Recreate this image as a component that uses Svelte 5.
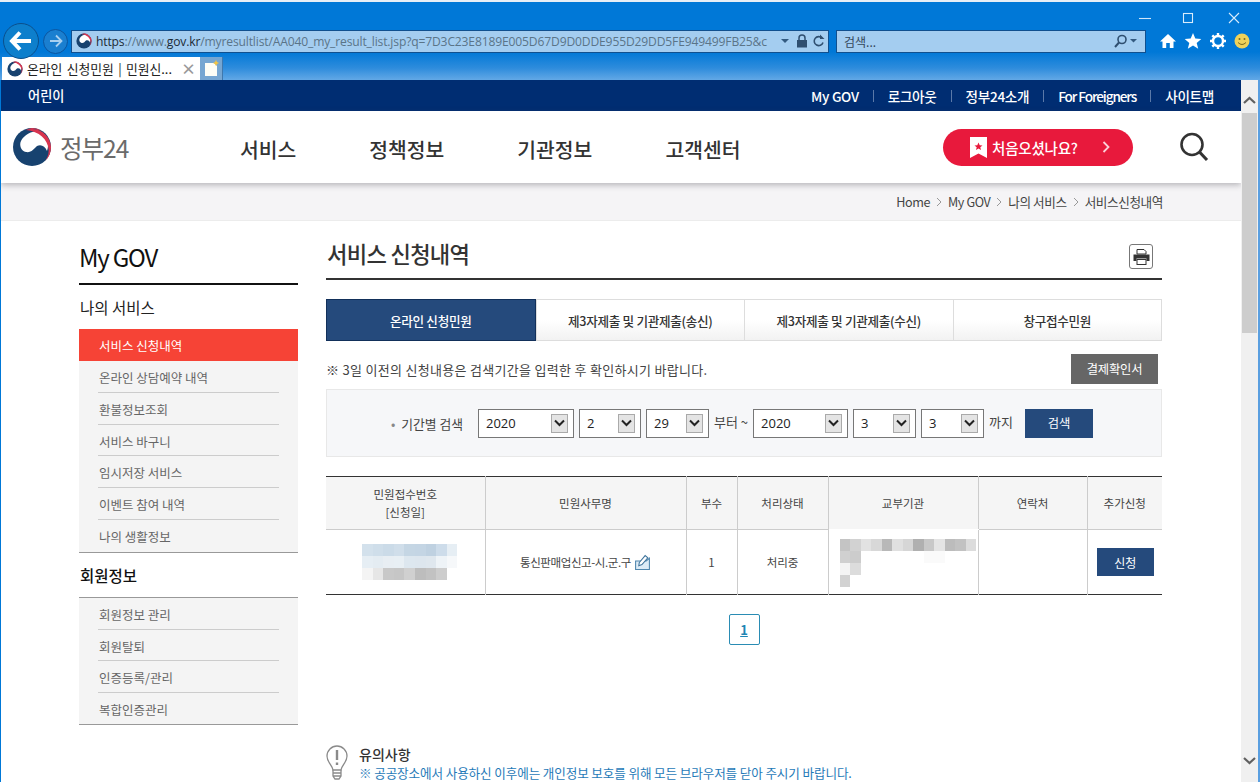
<script>
  const links = ['My GOV', '로그아웃', '정부24소개', 'For Foreigners', '사이트맵'];
  const mainNav = ['서비스', '정책정보', '기관정보', '고객센터'];
  const crumbs = ['Home', 'My GOV', '나의 서비스', '서비스신청내역'];
  const tabs = ['온라인 신청민원', '제3자제출 및 기관제출(송신)', '제3자제출 및 기관제출(수신)', '창구접수민원'];
  const myService = ['온라인 상담예약 내역', '환불정보조회', '서비스 바구니', '임시저장 서비스', '이벤트 참여 내역', '나의 생활정보'];
  const member = ['회원정보 관리', '회원탈퇴', '인증등록/관리', '복합인증관리'];

  const from = [{ v: '2020', w: 96 }, { v: '2', w: 62 }, { v: '29', w: 63 }];
  const to = [{ v: '2020', w: 95 }, { v: '3', w: 63 }, { v: '3', w: 63 }];

  const w = '#fff';
  const mosaicA = [
    '#d3e1ec', '#cfdeea', '#cbdbe8', '#d0deea', '#c5d6e4', '#c4d5e4', '#bfd1e1', '#cddcea', '#e6eef4',
    '#e6eef4', '#e4ecf2', '#e8eef3', '#e8eff4', '#dde7ef', '#dde6ee', '#dfe7ee', '#eef3f7', '#f6f8fa',
    '#f4f4f4', '#e6e6e6', '#c8c8c8', '#c6c6c6', '#d0d0d0', '#bdbdbd', '#c2c2c2', '#cdcdcd', w
  ];
  const mosaicB = [
    '#c4c4c4', '#d2d2d2', '#e2e2e2', '#d8d8d8', '#b8b8b8', '#e0e0e0', '#d6d6d6', '#b0b0b0', '#c8c8c8', '#e4e4e4', '#bcbcbc', '#c2c2c2', '#dcdcdc',
    '#d0d0d0', '#cccccc', w, w, w, w, w, w, '#fafafa', '#fafafa', w, w, w,
    '#f4f4f4', '#dcdcdc', w, w, w, w, w, w, w, w, w, w, w,
    '#d2d2d2', w, w, w, w, w, w, w, w, w, w, w, w
  ];
</script>

{#snippet emblem(size)}
  <svg class="emblem" width={size} height={size} viewBox="0 0 40 40">
    <circle cx="20" cy="20" r="19" fill="#17426f" />
    <path d="M27 4C35 7 38 16 35 24C33 19 29 17 25 19C22 22 19 26 14 25C9 24 7 18 9 14C12 8 19 4 27 4Z" fill="#fff" />
    <path d="M39 20A19 19 0 0 1 33 34C36 30 37 26 36.500 22C36 13 27 4 14 3A19 19 0 0 1 39 20Z" fill="#d8344f" />
    <path d="M14 3A19 19 0 0 1 20 1A19 19 0 0 1 30 4C24 2 19 2 14 3Z" fill="#d8344f" />
  </svg>
{/snippet}

{#snippet selectBox(item)}
  <div class="select" style="width: {item.w}px">
    <span>{item.v}</span>
    <i class="select-arrow">
      <svg width="11" height="8" viewBox="0 0 11 8"><path d="M1 1.500L5.500 6L10 1.500" fill="none" stroke="#222" stroke-width="2" /></svg>
    </i>
  </div>
{/snippet}

<div class="screen">
  <div class="browser">
    <div class="titlebar">
      <svg width="110" height="20" viewBox="0 0 110 20" fill="none" stroke="#fff" stroke-width="1.100">
        <path d="M0 10.500H12" stroke="#cfe6fa" />
        <rect x="44.500" y="5.500" width="9" height="9" stroke="#d8ecfc" />
        <path d="M90 5L100 15M100 5L90 15" stroke="#d8ecfc" />
      </svg>
    </div>

    <div class="toolbar">
      <div class="back">
        <svg width="24" height="22" viewBox="0 0 24 22"><path d="M11 2.500L3 11L11 19.500M3.500 11H22" fill="none" stroke="#fff" stroke-width="4" /></svg>
      </div>
      <div class="forward">
        <svg width="14" height="14" viewBox="0 0 14 14"><path d="M7 1.500L12.500 7L7 12.500M12 7H1" fill="none" stroke="#a8d0f0" stroke-width="1.800" /></svg>
      </div>
      <div class="address">
        {@render emblem(16)}
        <span class="url"><b>https</b>://www.<b>gov.kr</b>/myresultlist/AA040_my_result_list.jsp?q=7D3C23E8189E005D67D9D0DDE955D29DD5FE949499FB25&amp;c</span>
        <svg class="addr-icons" width="44" height="14" viewBox="0 0 44 14">
          <path d="M0 5H8L4 9Z" fill="#335a80" />
          <rect x="16" y="6" width="10" height="7.500" fill="#2f4f70" />
          <path d="M18 6V4A3 3 0 0 1 24 4V6" fill="none" stroke="#2f4f70" stroke-width="1.500" />
          <path d="M41 4A4.500 4.500 0 1 0 42 8.500" fill="none" stroke="#2f4f70" stroke-width="1.600" />
          <path d="M39 0.500V5H43.500Z" fill="#2f4f70" />
        </svg>
      </div>
      <div class="search-box">
        <span>검색...</span>
        <svg width="24" height="14" viewBox="0 0 24 14">
          <circle cx="8" cy="5.500" r="4" fill="none" stroke="#2f4f70" stroke-width="1.600" />
          <path d="M5 8.500L1 13" stroke="#2f4f70" stroke-width="2" />
          <path d="M16 5H23L19.500 8.500Z" fill="#335a80" />
        </svg>
      </div>
      <div class="tools">
        <svg width="18" height="18" viewBox="0 0 18 18"><path d="M9 2L17 9.500H14.500V16H10.800V11H7.200V16H3.500V9.500H1Z" fill="#fff" /></svg>
        <svg width="18" height="18" viewBox="0 0 18 18"><path d="M9 1L11.300 6.600L17.300 7L12.700 10.900L14.200 16.800L9 13.600L3.800 16.800L5.300 10.900L0.700 7L6.700 6.600Z" fill="#fff" /></svg>
        <svg width="18" height="18" viewBox="0 0 18 18">
          <circle cx="9" cy="9" r="5" fill="none" stroke="#fff" stroke-width="2.400" />
          <path d="M9 1V4M9 14V17M1 9H4M14 9H17M3.300 3.300L5.400 5.400M12.600 12.600L14.700 14.700M14.700 3.300L12.600 5.400M5.400 12.600L3.300 14.700" stroke="#fff" stroke-width="2.400" />
        </svg>
        <svg width="16" height="16" viewBox="0 0 16 16">
          <circle cx="8" cy="8" r="7.500" fill="#efd25a" />
          <circle cx="5.500" cy="6" r="1" fill="#7a6a20" />
          <circle cx="10.500" cy="6" r="1" fill="#7a6a20" />
          <path d="M4 9.500Q8 13.500 12 9.500" fill="none" stroke="#7a6a20" />
        </svg>
      </div>
    </div>

    <div class="tabstrip">
      <div class="browser-tab">
        {@render emblem(16)}
        <span class="tab-title">온라인 신청민원 | 민원신...</span>
        <span class="tab-close">×</span>
      </div>
      <div class="new-tab">
        <svg width="15" height="17" viewBox="0 0 15 17">
          <path d="M1 3H10L13 6V16H1Z" fill="#fdfdf6" />
          <path d="M12 0L13 2L15 3L13 4L12 6L11 4L9 3L11 2Z" fill="#f4c542" />
        </svg>
      </div>
    </div>
  </div>

  <div class="viewport">
    <div class="page">
      <div class="topbar">
        <span class="kids">어린이</span>
        <div class="top-links">
          {#each links as link, i}
            {#if i > 0}<i class="top-sep"></i>{/if}
            <span class:latin={i === 3}>{link}</span>
          {/each}
        </div>
      </div>

      <header class="site-header">
        <div class="logo">
          {@render emblem(40)}
          <span class="logo-text">정부24</span>
        </div>
        <nav class="main-nav">
          {#each mainNav as item}
            <span>{item}</span>
          {/each}
        </nav>
        <button class="first-visit">
          <svg width="17" height="21" viewBox="0 0 17 21">
            <path d="M0 0H17V21L8.500 16.500L0 21Z" fill="#fff" />
            <path d="M8.500 5.500L9.700 8.300L12.500 8.500L10.300 10.300L11 13L8.500 11.500L6 13L6.700 10.300L4.500 8.500L7.300 8.300Z" fill="#e8193c" />
          </svg>
          <span>처음오셨나요?</span>
          <svg class="go" width="8" height="12" viewBox="0 0 8 12"><path d="M1.500 1L6.500 6L1.500 11" fill="none" stroke="#fbd0d8" stroke-width="1.800" /></svg>
        </button>
        <svg class="site-search" width="30" height="30" viewBox="0 0 30 30">
          <circle cx="13" cy="12.500" r="10.500" fill="none" stroke="#333" stroke-width="2.600" />
          <path d="M20.500 20L28 28" stroke="#333" stroke-width="3" />
        </svg>
      </header>

      <div class="crumbs">
        {#each crumbs as crumb, i}
          {#if i > 0}
            <svg width="6" height="10" viewBox="0 0 6 10"><path d="M1 1L5 5L1 9" fill="none" stroke="#999" /></svg>
          {/if}
          <span>{crumb}</span>
        {/each}
      </div>

      <div class="body">
        <aside class="sidebar">
          <h2>My GOV</h2>
          <h3>나의 서비스</h3>
          <ul class="side-list">
            <li class="active"><span>서비스 신청내역</span></li>
            {#each myService as item}
              <li><span>{item}</span></li>
            {/each}
          </ul>
          <h3 class="strong">회원정보</h3>
          <ul class="side-list boxed">
            {#each member as item}
              <li><span>{item}</span></li>
            {/each}
          </ul>
        </aside>

        <main class="content">
          <div class="title-row">
            <h1>서비스 신청내역</h1>
            <button class="print" aria-label="인쇄">
              <svg width="17" height="16" viewBox="0 0 17 16">
                <path d="M4 0.500H11L13 2.500V5H4Z" fill="none" stroke="#333" />
                <path d="M0.500 5.500H16.500V12H13.500V9.500H3.500V12H0.500Z" fill="#333" />
                <rect x="4" y="10.500" width="9" height="5" fill="none" stroke="#333" />
              </svg>
            </button>
          </div>

          <div class="tabs">
            {#each tabs as tab, i}
              <div class="tab" class:on={i === 0}>{tab}</div>
            {/each}
          </div>

          <div class="note-row">
            <p>※ 3일 이전의 신청내용은 검색기간을 입력한 후 확인하시기 바랍니다.</p>
            <button class="payment">결제확인서</button>
          </div>

          <div class="period">
            <span class="period-label"><em>•</em> 기간별 검색</span>
            {#each from as item}
              {@render selectBox(item)}
            {/each}
            <span class="period-word">부터 ~</span>
            {#each to as item}
              {@render selectBox(item)}
            {/each}
            <span class="period-word">까지</span>
            <button class="find">검색</button>
          </div>

          <table>
            <colgroup>
              <col style="width: 159px" />
              <col style="width: 201px" />
              <col style="width: 51px" />
              <col style="width: 91px" />
              <col style="width: 150px" />
              <col style="width: 109px" />
              <col />
            </colgroup>
            <thead>
              <tr>
                <th>민원접수번호<br />[신청일]</th>
                <th>민원사무명</th>
                <th>부수</th>
                <th>처리상태</th>
                <th class="no-line">교부기관</th>
                <th>연락처</th>
                <th>추가신청</th>
              </tr>
            </thead>
            <tbody>
              <tr>
                <td>
                  <div class="mosaic a">
                    {#each mosaicA as c}
                      <i style="background: {c}"></i>
                    {/each}
                  </div>
                </td>
                <td>
                  <span class="service">통신판매업신고-시.군.구
                    <svg width="17" height="17" viewBox="0 0 16 16">
                      <path d="M1.500 6.500H11.500L14.500 4V14.500H1.500Z" fill="#dcebf6" stroke="#4f86ae" />
                      <path d="M5 8L10.500 1.500L13 3.500L7.500 10L4.500 11Z" fill="#fff" stroke="#3f749c" />
                    </svg>
                  </span>
                </td>
                <td>1</td>
                <td>처리중</td>
                <td class="blurred">
                  <div class="mosaic b">
                    {#each mosaicB as c}
                      <i style="background: {c}"></i>
                    {/each}
                  </div>
                </td>
                <td></td>
                <td><button class="apply">신청</button></td>
              </tr>
            </tbody>
          </table>

          <div class="pager"><a href="#top">1</a></div>

          <div class="notice">
            <svg width="22" height="36" viewBox="0 0 22 36" fill="none" stroke="#8a8a8a" stroke-width="1.300">
              <path d="M7 25C6 20 1 17 1 11A10 10 0 0 1 21 11C21 17 16 20 15 25Z" />
              <path d="M11 5V15" stroke-width="2.400" />
              <path d="M11 17.500V20" stroke-width="2.400" />
              <path d="M7 25V31L9 34H13L15 31V25M7 28H15M7 31H15" />
            </svg>
            <div>
              <strong>유의사항</strong>
              <p>※ 공공장소에서 사용하신 이후에는 개인정보 보호를 위해 모든 브라우저를 닫아 주시기 바랍니다.</p>
            </div>
          </div>
        </main>
      </div>
    </div>

    <div class="scrollbar">
      <svg width="17" height="10" viewBox="0 0 17 10"><path d="M3 8L8.500 3L14 8" fill="none" stroke="#606060" stroke-width="2.200" /></svg>
      <div class="thumb"></div>
      <svg class="down" width="17" height="10" viewBox="0 0 17 10"><path d="M3 2L8.500 7L14 2" fill="none" stroke="#606060" stroke-width="2.200" /></svg>
    </div>
  </div>
</div>

<style>
  :global(body) {
    margin: 0;
    background: #fff;
  }

  .screen {
    width: 1260px;
    height: 782px;
    overflow: hidden;
    font-family: "Noto Sans CJK KR", "Noto Sans", sans-serif;
    color: #333;
  }

  button {
    font-family: inherit;
    border: none;
    cursor: pointer;
    padding: 0;
  }

  h1, h2, h3, p, ul {
    margin: 0;
    padding: 0;
  }

  /* browser chrome */
  .browser {
    height: 80px;
    box-sizing: border-box;
    background: linear-gradient(#0078d7 0, #0078d7 50px, #2e8cdc 66px, #62a8e6 78px);
    border-top: 2px solid #e6eef6;
  }

  .titlebar {
    height: 27px;
    padding-left: 1139px;
    padding-top: 6px;
    box-sizing: border-box;
  }

  .toolbar {
    display: flex;
    align-items: center;
    height: 24px;
    padding-left: 3px;
    position: relative;
    z-index: 2;
  }

  .back {
    width: 36px;
    height: 36px;
    border-radius: 50%;
    background: #0d7fcc;
    border: 1px solid #0a4f8c;
    display: flex;
    align-items: center;
    justify-content: center;
    box-sizing: border-box;
    flex: none;
  }

  .forward {
    width: 25px;
    height: 25px;
    margin-left: 4px;
    border-radius: 50%;
    background: #1a7fd0;
    border: 1px solid #0a55a0;
    display: flex;
    align-items: center;
    justify-content: center;
    box-sizing: border-box;
    flex: none;
  }

  .address {
    width: 758px;
    height: 23px;
    margin-left: 3px;
    display: flex;
    align-items: center;
    gap: 4px;
    padding-left: 4px;
    background: #a4cdf0;
    border: 1px solid #10508f;
    box-sizing: border-box;
    flex: none;
  }

  .url {
    flex: 1;
    min-width: 0;
    white-space: nowrap;
    overflow: hidden;
    font-family: "Open Sans", sans-serif;
    font-size: 12.100px;
    letter-spacing: -0.15px;
    color: #5a7488;
  }

  .url b {
    font-weight: 400;
    color: #1c2a36;
  }

  .addr-icons {
    flex: none;
    margin-right: 3px;
  }

  .search-box {
    width: 310px;
    height: 23px;
    margin-left: 7px;
    display: flex;
    align-items: center;
    justify-content: space-between;
    padding: 0 7px;
    background: #a4cdf0;
    border: 1px solid #10508f;
    box-sizing: border-box;
    font-size: 12px;
    color: #33475a;
    flex: none;
  }

  .tools {
    display: flex;
    align-items: center;
    gap: 7px;
    margin-left: 13px;
  }

  .tabstrip {
    display: flex;
    height: 23px;
    margin-top: 4px;
    padding-left: 2px;
  }

  .browser-tab {
    width: 198px;
    height: 23px;
    display: flex;
    align-items: center;
    gap: 4px;
    padding-left: 5px;
    background: #fff;
    box-sizing: border-box;
    color: #222;
  }

  .tab-title {
    font-size: 12.800px;
    word-spacing: 1.500px;
    white-space: nowrap;
  }

  .tab-close {
    margin-left: auto;
    margin-right: 4px;
    font-size: 15px;
    font-weight: 700;
    color: #999;
    line-height: 1;
  }

  .new-tab {
    width: 22px;
    height: 23px;
    display: flex;
    align-items: center;
    justify-content: center;
    background: #76a6d2;
    border-right: 1px solid #3f78ad;
  }

  /* page */
  .viewport {
    display: flex;
    height: 702px;
    border-left: 1px solid #0078d7;
  }

  .page {
    width: 1240px;
    flex: none;
    overflow: hidden;
    background: #fff;
  }

  .scrollbar {
    width: 17px;
    height: 687px;
    flex: none;
    display: flex;
    flex-direction: column;
    align-items: center;
    background: #f0f0f0;
    padding-top: 15px;
    border-right: 2px solid #5a9fe0;
  }

  .thumb {
    width: 15px;
    height: 220px;
    margin-top: 8px;
    background: #cdcdcd;
  }

  .down {
    margin-top: auto;
    margin-bottom: 16px;
  }

  .topbar {
    height: 31px;
    background: #002d72;
    display: flex;
    align-items: center;
    justify-content: space-between;
    padding: 0 27px 0 27px;
    color: #fff;
    font-size: 13.200px;
    font-weight: 500;
  }

  .top-links {
    display: flex;
    align-items: center;
    font-size: 13.600px;
    letter-spacing: -0.3px;
  }

  .top-links .latin {
    letter-spacing: -1.100px;
  }

  .top-sep {
    width: 1px;
    height: 12px;
    margin: 0 14px;
    background: #5b79a8;
  }

  .site-header {
    height: 72px;
    display: flex;
    align-items: center;
    background: #fff;
    box-shadow: 0 2px 6px rgba(60, 60, 70, 0.35);
    position: relative;
    padding-right: 32px;
  }

  .logo {
    width: 239px;
    display: flex;
    align-items: center;
    gap: 8px;
    padding-left: 11px;
    box-sizing: border-box;
    flex: none;
  }

  .logo-text {
    font-size: 24.500px;
    font-weight: 400;
    color: #6b6b6b;
    letter-spacing: -1px;
  }

  .main-nav {
    flex: 1;
    display: flex;
    gap: 73px;
    padding-top: 3px;
    font-size: 20.400px;
    font-weight: 500;
    color: #333;
  }

  .first-visit {
    width: 190px;
    height: 37px;
    margin-left: 1px;
    display: flex;
    align-items: center;
    padding-left: 27px;
    box-sizing: border-box;
    border-radius: 19px;
    background: #e8193c;
    color: #fff;
    font-size: 14.500px;
    font-weight: 500;
    letter-spacing: -0.2px;
  }

  .first-visit span {
    margin-left: 5px;
  }

  .go {
    margin-left: 24px;
  }

  .site-search {
    margin-left: 46px;
    flex: none;
  }

  .crumbs {
    height: 37px;
    display: flex;
    align-items: center;
    justify-content: flex-end;
    gap: 6px;
    padding-right: 78px;
    background: #f5f4f6;
    border-bottom: 1px solid #ececec;
    font-size: 12.600px;
    letter-spacing: -0.4px;
    color: #444;
  }

  .body {
    display: flex;
    gap: 28px;
    padding-left: 78px;
  }

  .sidebar {
    width: 219px;
    flex: none;
    padding-top: 20px;
  }

  h2 {
    height: 42px;
    line-height: 32px;
    border-bottom: 2px solid #111;
    font-size: 24px;
    font-weight: 400;
    letter-spacing: -1.2px;
    color: #111;
  }

  h3 {
    height: 44px;
    line-height: 44px;
    font-size: 15.500px;
    font-weight: 400;
    color: #222;
    padding-left: 1px;
  }

  h3.strong {
    font-weight: 500;
    color: #111;
  }

  .side-list {
    list-style: none;
    background: #f4f4f4;
    border-bottom: 1px solid #999;
    font-size: 12.500px;
    color: #666;
  }

  .side-list.boxed {
    border-top: 1px solid #999;
  }

  .side-list li {
    height: 31.850px;
    padding: 0 19px;
    box-sizing: border-box;
  }

  .side-list.boxed li {
    height: 31.600px;
  }

  .side-list li span {
    display: block;
    height: 100%;
    line-height: 33px;
    padding-left: 1px;
    border-bottom: 1px solid #ccc;
    box-sizing: border-box;
  }

  .side-list li:last-child span {
    border-bottom: none;
  }

  .side-list li.active {
    background: #f64336;
    color: #fff;
  }

  .side-list li.active span {
    border-bottom: none;
  }

  .content {
    width: 836px;
    flex: none;
    padding-top: 20px;
  }

  .title-row {
    height: 37px;
    display: flex;
    align-items: flex-start;
    justify-content: space-between;
    border-bottom: 2px solid #333;
    margin-bottom: 19px;
  }

  h1 {
    font-size: 22.200px;
    line-height: 24px;
    font-weight: 500;
    letter-spacing: -0.7px;
    color: #333;
    padding-left: 1px;
  }

  .print {
    width: 24px;
    height: 25px;
    margin: 3px 9px 0 0;
    background: #fff;
    border: 1px solid #777;
    border-radius: 3px;
    display: flex;
    align-items: center;
    justify-content: center;
  }

  .tabs {
    display: grid;
    grid-template-columns: repeat(4, 1fr);
    height: 42px;
    border: 1px solid #ddd;
    box-sizing: border-box;
  }

  .tab {
    display: flex;
    align-items: center;
    justify-content: center;
    font-size: 12.600px;
    font-weight: 500;
    letter-spacing: -0.3px;
    color: #333;
    background: linear-gradient(#fff 50%, #f2f2f2);
    border-left: 1px solid #ddd;
  }

  .tab:first-child {
    border-left: none;
  }

  .tab.on {
    margin: -1px 0 -1px -1px;
    background: #254a7c;
    border: 1px solid #12305a;
    color: #fff;
  }

  .note-row {
    height: 30px;
    margin-top: 13px;
    display: flex;
    align-items: center;
    justify-content: space-between;
    padding-right: 4px;
    font-size: 13px;
    letter-spacing: 0.3px;
    color: #444;
  }

  .note-row p {
    margin-top: 1px;
  }

  .payment {
    width: 87px;
    height: 30px;
    background: #666;
    color: #fff;
    font-size: 12.300px;
    letter-spacing: -0.2px;
  }

  .period {
    height: 68px;
    margin-top: 5px;
    display: flex;
    align-items: center;
    padding-left: 64px;
    gap: 5px;
    background: #f6f7f9;
    border: 1px solid #e8e8e8;
    box-sizing: border-box;
    font-size: 12.300px;
    color: #444;
  }

  .period-label {
    width: 82px;
    flex: none;
    font-size: 12.800px;
    white-space: nowrap;
  }

  .period-label em {
    font-style: normal;
    color: #888;
    margin-right: 3px;
  }

  .period-word {
    margin-top: -4px;
    font-size: 13px;
    white-space: nowrap;
  }

  .select {
    height: 29px;
    display: flex;
    align-items: center;
    justify-content: space-between;
    padding: 0 2px 0 7px;
    background: #fff;
    border: 1px solid #777;
    box-sizing: border-box;
    font-family: "Open Sans", sans-serif;
    font-size: 13px;
    color: #222;
    flex: none;
  }

  .select-arrow {
    width: 17px;
    height: 19px;
    display: flex;
    align-items: center;
    justify-content: center;
    margin-right: 3px;
    background: #e4e4e4;
    border: 1px solid #aaa;
    box-sizing: border-box;
  }

  .find {
    width: 68px;
    height: 29px;
    margin-left: 7px;
    background: #254a7c;
    color: #fff;
    font-size: 12.300px;
  }

  table {
    width: 836px;
    margin-top: 19px;
    table-layout: fixed;
    border-collapse: collapse;
    border-top: 1px solid #333;
    border-bottom: 1px solid #333;
    font-size: 11.500px;
    color: #444;
    text-align: center;
  }

  th {
    height: 52px;
    padding: 0;
    background: #f5f5f5;
    border-left: 1px solid #ccc;
    border-bottom: 1px solid #ccc;
    font-weight: 400;
    line-height: 18px;
  }

  th.no-line {
    border-bottom-color: #fff;
  }

  td {
    height: 64px;
    padding: 0;
    border-left: 1px solid #ccc;
  }

  th:first-child,
  td:first-child {
    border-left: none;
  }

  .service {
    display: inline-flex;
    align-items: center;
    gap: 3px;
    letter-spacing: -0.4px;
  }

  .blurred {
    vertical-align: top;
  }

  .mosaic {
    display: grid;
  }

  .mosaic i {
    display: block;
  }

  .mosaic.a {
    grid-template-columns: repeat(9, 10.600px);
    grid-auto-rows: 11.700px;
    width: 96px;
    margin-left: 36px;
  }

  .mosaic.b {
    grid-template-columns: repeat(13, 10.500px);
    grid-auto-rows: 12px;
    margin: 9px 0 0 11px;
  }

  .apply {
    width: 57px;
    height: 28px;
    margin-left: 1px;
    background: #254a7c;
    color: #fff;
    font-size: 12px;
  }

  .pager {
    margin-top: 19px;
    display: flex;
    justify-content: center;
  }

  .pager a {
    width: 31px;
    height: 31px;
    display: flex;
    align-items: center;
    justify-content: center;
    border: 1px solid #2a8cb4;
    border-radius: 2px;
    box-sizing: border-box;
    font-size: 13px;
    font-weight: 700;
    color: #1f86b4;
    text-decoration: underline;
  }

  .notice {
    margin-top: 100px;
    display: flex;
    gap: 11px;
  }

  .notice strong {
    display: block;
    font-size: 14px;
    line-height: 18px;
    font-weight: 500;
    color: #333;
  }

  .notice p {
    font-size: 12.600px;
    line-height: 20px;
    letter-spacing: -0.12px;
    color: #1f7ab8;
  }
</style>
